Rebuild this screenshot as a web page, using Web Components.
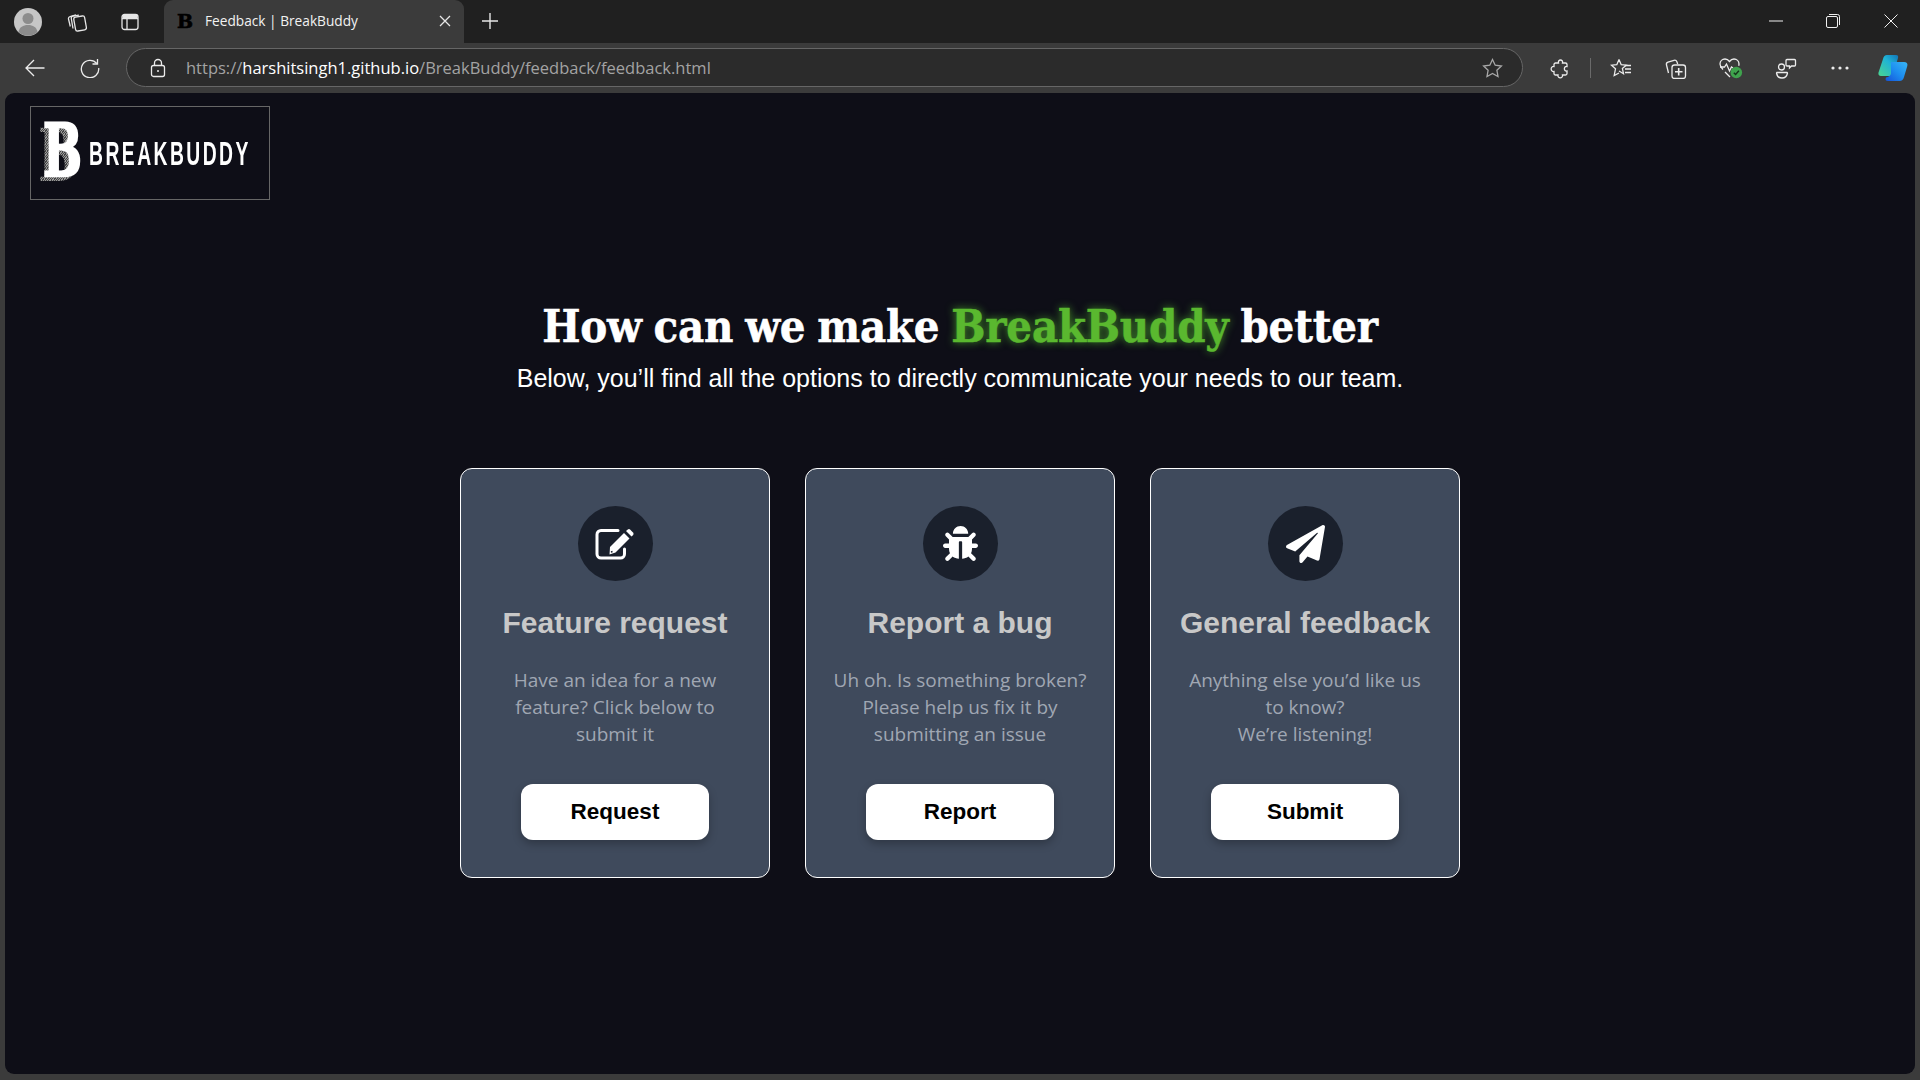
<!DOCTYPE html>
<html lang="en">
<head>
<meta charset="utf-8">
<title>Feedback | BreakBuddy</title>
<style>
  html, body { margin: 0; height: 100%; overflow: hidden; background: #3b3b3b; }
  body { display: flex; flex-direction: column; font-family: "Liberation Sans", sans-serif; }
  browser-frame { flex: 1; min-height: 0; }
</style>
</head>
<body>

<template id="tpl-frame">
  <style>
    :host { display: flex; flex-direction: column; height: 100%; }
    .viewport { flex: 1; min-height: 0; margin: 0 5px 6px 5px; border-radius: 9px; background: #0e0e17; overflow: hidden; display: flex; flex-direction: column; }
  </style>
  <browser-tabs></browser-tabs>
  <browser-toolbar></browser-toolbar>
  <div class="viewport"><slot></slot></div>
</template>

<template id="tpl-tabs">
  <style>
    :host { display: flex; height: 43px; background: #202020; color: #fff; font: 14px "Open Sans", sans-serif; }
    svg { display: block; fill: none; stroke: #e6e6e6; stroke-width: 1.3; }
    .left { display: flex; width: 164px; flex: none; align-items: center; }
    .avatar { margin-left: 14px; width: 28px; height: 28px; flex: none; }
    .ic { flex: none; }
    .tab { width: 300px; flex: none; background: #3b3b3b; border-radius: 9px 9px 0 0; display: flex; align-items: center; box-sizing: border-box; padding: 0 13px 2px 13px; }
    .fav { width: 13px; font: 700 19px "DejaVu Serif", serif; color: #000; text-align: center; flex: none; -webkit-text-stroke: .6px #000; }
    .title { margin-left: 15px; flex: 1; font-size: 13.7px; color: #f2f2f2; white-space: nowrap; }
    .plus { margin-left: 17px; align-self: center; margin-top: -2px; }
    .spacer { flex: 1; }
    .win { display: flex; align-items: center; margin-top: -1px; }
    .win svg { stroke: #f0f0f0; stroke-width: 1; }
  </style>
  <div class="left">
    <svg class="avatar" viewBox="0 0 28 28" style="stroke:none">
      <circle cx="14" cy="14" r="14" fill="#c6c6c6"/>
      <circle cx="14" cy="10.500" r="5.500" fill="#8c8c8c"/>
      <path d="M4.500 24c1-5 4.500-7 9.500-7s8.500 2 9.500 7a14 14 0 0 1-19 0z" fill="#8c8c8c"/>
    </svg>
    <svg class="ic" style="margin-left:24px" width="22" height="22" viewBox="0 0 22 22">
      <rect x="8.500" y="5.500" width="11" height="14" rx="2" transform="rotate(-10 14 12)"/>
      <path d="M7 17.500 5.300 7.500a2 2 0 0 1 1.600-2.300l6-1.100"/>
      <path d="M4.300 15.500 2.500 8a2 2 0 0 1 1.500-2.400l6-1.700"/>
    </svg>
    <svg class="ic" style="margin-left:32px" width="20" height="20" viewBox="0 0 20 20" >
      <rect x="2" y="2.500" width="16" height="15" rx="2.500"/>
      <path d="M2 6.500h16M7 6.500v11"/>
      <path d="M2.500 4.500h15" stroke-width="3"/>
    </svg>
  </div>
  <div class="tab">
    <span class="fav">B</span>
    <span class="title">Feedback | BreakBuddy</span>
    <svg width="12" height="12" viewBox="0 0 12 12" style="stroke-width:1.300"><path d="M1 1l10 10M11 1 1 11"/></svg>
  </div>
  <svg class="plus" width="18" height="18" viewBox="0 0 18 18" style="stroke-width:1.400"><path d="M9 1v16M1 9h16"/></svg>
  <span class="spacer"></span>
  <div class="win">
    <svg width="14" height="4" viewBox="0 0 14 4"><path d="M0 2h14"/></svg>
    <svg style="margin-left:43px" width="14" height="14" viewBox="0 0 14 14"><rect x=".5" y="2.500" width="11" height="11" rx="1.500"/><path d="M3 .5h8.500a2 2 0 0 1 2 2V11"/></svg>
    <svg style="margin:0 22px 0 44px" width="14" height="14" viewBox="0 0 14 14"><path d="M.5.5l13 13M13.500.5l-13 13"/></svg>
  </div>
</template>

<template id="tpl-toolbar">
  <style>
    :host { display: flex; align-items: center; height: 50px; background: #3b3b3b; }
    svg { display: block; fill: none; stroke: #ececec; stroke-width: 1.3; flex: none; }
    .nav { display: flex; align-items: center; width: 126px; flex: none; }
    .address { flex: none; width: 1397px; height: 39px; box-sizing: border-box; margin-top: -1px; border: 1px solid #666; border-radius: 20px; background: #2b2b2b; display: flex; align-items: center; padding-left: 23px; font: 16.500px "Open Sans", sans-serif; color: #a3a3a3; white-space: nowrap; }
    .url { margin-left: 20px; flex: 1; }
    .url b { font-weight: 400; color: #fff; }
    .btn { width: 55px; display: flex; justify-content: center; flex: none; }
    .sep { width: 1px; height: 20px; background: #6a6a6a; flex: none; margin: 0 2px 0 3px; }
  </style>
  <div class="nav">
    <svg style="margin-left:25px" width="20" height="18" viewBox="0 0 20 18" stroke-width="1.400"><path d="M19.500 9H1M9 1 1 9l8 8"/></svg>
    <svg style="margin-left:35px" width="20" height="20" viewBox="0 0 20 20"><path d="M16.800 5.500A8.700 8.700 0 1 0 18.700 10"/><path d="M17.500 1v5h-5"/></svg>
  </div>
  <div class="address">
    <svg width="16" height="20" viewBox="0 0 16 20"><rect x="1.500" y="7.500" width="13" height="11" rx="2"/><path d="M4.500 7.500V5a3.500 3.500 0 0 1 7 0v2.500"/><circle cx="8" cy="13" r="1" fill="#ececec" stroke="none"/></svg>
    <span class="url">https://<b>harshitsingh1.github.io</b>/BreakBuddy/feedback/feedback.html</span>
    <svg style="margin-right:19px;stroke:#a8a8a8" width="21" height="20" viewBox="0 0 21 20"><path d="M10.500 1.500l2.700 5.700 6.200.8-4.500 4.300 1.100 6.200-5.500-3-5.500 3 1.100-6.200L1.600 8l6.200-.8z"/></svg>
  </div>
  <span class="btn" style="margin-left:9px">
    <svg width="20" height="21" viewBox="0 0 20 21"><path d="M5.500 5H8.500C7.500 1 13.500 1 12.500 5H15.500a1.500 1.500 0 0 1 1.500 1.500V8.500C13.500 7.800 13.500 13.700 17 13V15.500a1.500 1.500 0 0 1-1.500 1.500H12.500C13.300 20.700 7.200 20.700 8 17H5.500A1.500 1.500 0 0 1 4 15.500V13.500C.2 14 .2 8 4 8.500V6.500A1.500 1.500 0 0 1 5.500 5z"/></svg>
  </span>
  <span class="sep"></span>
  <span class="btn">
    <svg width="22" height="20" viewBox="0 0 22 20"><path d="M9 1.500l2.200 5.200 5 .5-3.800 3.400 1.100 5.100L9 13M9 1.500 6.800 6.700l-5.300.5 4 3.600-1.300 6.700L9 15"/><path d="M15 7.500h6M15 11h6M15 14.500h6"/></svg>
  </span>
  <span class="btn">
    <svg width="22" height="21" viewBox="0 0 22 21"><path d="M3.500 15 1.500 7c-.4-1.500.3-2.500 1.500-2.900l6-1.800c1.300-.4 2.400.2 2.900 1.500l.8 2.200"/><rect x="7" y="7" width="13.500" height="13.500" rx="2.500"/><path d="M13.700 10v7.500M10 13.700h7.500" stroke-width="1.600"/></svg>
  </span>
  <span class="btn">
    <svg width="24" height="22" viewBox="0 0 24 22"><path d="M4 12.500C2 10.500 1 9 1 7c0-3 2.300-5 5-5 2 0 3.400 1 4.500 2.500C11.600 3 13 2 15 2c2.700 0 5 2 5 5 0 .7-.1 1.300-.3 1.800"/><path d="M1 10h4.500l2-3 3 7 2-4 1.500 1M6 15l5 5"/><circle cx="17.300" cy="15.500" r="5.800" fill="#3fa34d" stroke="none"/><path d="M14.800 15.700l1.800 1.800 3.300-3.700" stroke="#14331a" stroke-width="1.400"/></svg>
  </span>
  <span class="btn">
    <svg width="22" height="21" viewBox="0 0 22 21"><circle cx="6.500" cy="9" r="3"/><path d="M1.500 14.500h10.500c.5 0 .5.500.4 1-.6 2.800-3 4.500-5.400 4.500s-4.800-1.700-5.400-4.500c-.1-.5-.1-1 .4-1z"/><path d="M12 1.500h7.500a1 1 0 0 1 1 1v4.500a1 1 0 0 1-1 1h-3l-2 2V8H12a1 1 0 0 1-1-1V2.500a1 1 0 0 1 1-1z"/></svg>
  </span>
  <span class="btn" style="width:54px">
    <svg width="18" height="4" viewBox="0 0 18 4" style="stroke:none;fill:#ececec"><circle cx="2" cy="2" r="1.600"/><circle cx="9" cy="2" r="1.600"/><circle cx="16" cy="2" r="1.600"/></svg>
  </span>
  <span class="btn" style="width:51px">
    <svg width="30" height="28" viewBox="0 0 30 28" style="stroke:none">
      <defs>
        <linearGradient id="cp1" x1="0" y1="1" x2="1" y2="0"><stop offset="0" stop-color="#4bd58f"/><stop offset=".6" stop-color="#1fb3d6"/><stop offset="1" stop-color="#1274b8"/></linearGradient>
        <linearGradient id="cp2" x1="0" y1="1" x2="1" y2="0"><stop offset="0" stop-color="#1653d8"/><stop offset=".5" stop-color="#1d8ef0"/><stop offset="1" stop-color="#38b6f5"/></linearGradient>
      </defs>
      <path d="M9 1h9c2 0 2.500 1 2 3l-4.500 15c-.6 2-1.500 3-3.500 3H3c-2 0-3-1.500-2.500-3.500L5 5c.6-2.500 2-4 4-4z" fill="url(#cp1)"/>
      <path d="M13 8h13c2.500 0 4 1.500 3.300 4L26 23c-.7 2.500-2 4-4.500 4H10c-2.500 0-3-1.500-2-3.500 3-.5 4.500-2 5-4z" fill="url(#cp2)"/>
    </svg>
  </span>
</template>

<template id="tpl-logo">
  <style>
    :host { display: flex; align-items: center; box-sizing: border-box; width: 240px; height: 94px; border: 1px solid #666; color: #fff; padding-left: 12px; }
    .mark { display: grid; flex: none; width: 36px; font: 700 72px/1 "DejaVu Serif", serif; transform: scaleX(.64); transform-origin: left center; -webkit-text-stroke: 2.500px #fff; }
    .mark::before { content: "B"; grid-area: 1 / 1; margin: 5px 0 0 -8px; color: transparent; -webkit-text-stroke: 0; background: repeating-linear-gradient(45deg, #999 0 1px, #444 1px 2px); -webkit-background-clip: text; background-clip: text; }
    .mark span { grid-area: 1 / 1; }
    .word { flex: none; margin-left: 10px; font: 700 33px/1 "Liberation Sans", sans-serif; letter-spacing: 4.200px; transform: scaleX(.585); transform-origin: left center; white-space: nowrap; width: 158px; }
  </style>
  <div class="mark"><span>B</span></div>
  <div class="word">BREAKBUDDY</div>
</template>

<template id="tpl-hero">
  <style>
    :host { display: block; text-align: center; color: #fff; margin-top: 97px; }
    h1 { margin: 0; font: 700 45px/60px "DejaVu Serif", serif; font-stretch: condensed; letter-spacing: -.2px; word-spacing: -2px; -webkit-text-stroke: .5px; }
    p { margin: 6px 0 0; font: 25px/30px "Liberation Sans", sans-serif; }
  </style>
  <h1><slot name="title"></slot></h1>
  <p><slot name="subtitle"></slot></p>
</template>

<template id="tpl-card">
  <style>
    :host { display: flex; flex-direction: column; align-items: center; box-sizing: border-box; width: 310px; height: 410px; padding: 37px 20px 0; background: #3f4a5c; border: 1px solid #fff; border-radius: 12px; text-align: center; }
    .circle { width: 75px; height: 75px; border-radius: 50%; background: #1a202c; display: flex; align-items: center; justify-content: center; flex: none; }
    ::slotted(svg) { fill: #fff; display: block; }
    h2 { margin: 24px 0 0; font: 700 30px/36px "Liberation Sans", sans-serif; color: #c8c8c8; white-space: nowrap; }
    p { margin: 26px 0 0; font: 19px/27px "Open Sans", sans-serif; color: #a0a7b3; height: 81px; width: 262px; }
    a { margin-top: 36px; width: 188px; height: 56px; box-sizing: border-box; display: flex; align-items: center; justify-content: center; background: #fff; border-radius: 12px; box-shadow: 0 4px 8px rgba(0,0,0,.25); color: #000; font: 700 22.500px "Liberation Sans", sans-serif; text-decoration: none; flex: none; }
  </style>
  <div class="circle"><slot name="icon"></slot></div>
  <h2><slot name="title"></slot></h2>
  <p><slot name="text"></slot></p>
  <a href="#"><slot name="action"></slot></a>
</template>

<browser-frame>
  <feedback-page>
    <site-logo slot="logo"></site-logo>
    <hero-heading slot="hero">
      <span slot="title">How can we make <span style="color:#5ab82f;text-shadow:0 0 8px rgba(90,200,50,.75)">BreakBuddy</span> better</span>
      <span slot="subtitle">Below, you’ll find all the options to directly communicate your needs to our team.</span>
    </hero-heading>
    <feedback-card>
      <svg slot="icon" width="40" height="32" viewBox="0 0 40 32">
        <path d="M23 2.500H6a4 4 0 0 0-4 4V26a4 4 0 0 0 4 4h19.500a4 4 0 0 0 4-4V21" fill="none" stroke="#fff" stroke-width="3" stroke-linecap="round"/>
        <path d="M29 5l5.500 5.500L20.500 24.500 14.500 26.500 15 19z"/>
        <path d="M31 3l1.800-1.500a2 2 0 0 1 2.500.2l2.700 2.700a2 2 0 0 1 .2 2.500L36.500 8.500z"/>
        <path d="M15.800 23.200l1.500-.4.500 1.500-1.800.5z" fill="#1a202c"/>
      </svg>
      <span slot="title">Feature request</span>
      <span slot="text">Have an idea for a new feature? Click below to submit it</span>
      <span slot="action">Request</span>
    </feedback-card>
    <feedback-card>
      <svg slot="icon" width="35" height="35" viewBox="0 0 512 512"><path d="M511.988 288.900c-.478 17.430-15.217 31.100-32.653 31.100H424v16c0 21.864-4.882 42.584-13.600 61.145l60.228 60.228c12.496 12.497 12.496 32.758 0 45.255-12.498 12.497-32.759 12.496-45.256 0l-54.736-54.736C345.886 467.965 314.351 480 280 480V236c0-6.627-5.373-12-12-12h-24c-6.627 0-12 5.373-12 12v244c-34.351 0-65.886-12.035-90.636-32.108l-54.736 54.736c-12.498 12.497-32.759 12.496-45.256 0-12.496-12.497-12.496-32.758 0-45.255l60.228-60.228C92.882 378.584 88 357.864 88 336v-16H32.666C15.230 320 .491 306.330.013 288.900-.484 270.816 14.028 256 32 256h56v-58.745l-46.628-46.628c-12.496-12.497-12.496-32.758 0-45.255 12.498-12.497 32.758-12.497 45.256 0L141.255 160h229.489l54.627-54.627c12.498-12.497 32.758-12.497 45.256 0 12.496 12.497 12.496 32.758 0 45.255L424 197.255V256h56c17.972 0 32.484 14.816 31.988 32.900zM257 0c-61.856 0-112 50.144-112 112h224C369 50.144 318.856 0 257 0z"/></svg>
      <span slot="title">Report a bug</span>
      <span slot="text">Uh oh. Is something broken? Please help us fix it by submitting an issue</span>
      <span slot="action">Report</span>
    </feedback-card>
    <feedback-card>
      <svg slot="icon" width="39" height="38" viewBox="0 0 512 512" preserveAspectRatio="none"><path d="M476 3.200L12.500 270.600c-18.100 10.400-15.800 35.600 2.200 43.200L121 358.400l287.300-253.200c5.500-4.900 13.300 2.600 8.600 8.300L176 407v80.500c0 23.600 28.500 32.900 42.500 15.800L282 426l124.600 52.200c14.200 6 30.400-2.900 33-18.200l72-432C515 7.800 493.300-6.800 476 3.200z"/></svg>
      <span slot="title">General feedback</span>
      <span slot="text">Anything else you’d like us<br>to know?<br>We’re listening!</span>
      <span slot="action">Submit</span>
    </feedback-card>
  </feedback-page>
</browser-frame>

<script>
  // every element just clones its template into an open shadow root
  function define(name, tplId) {
    customElements.define(name, class extends HTMLElement {
      constructor() {
        super();
        this.attachShadow({ mode: 'open' });
        this.shadowRoot.appendChild(document.getElementById(tplId).content.cloneNode(true));
      }
    });
  }

  define('browser-frame', 'tpl-frame');
  define('browser-tabs', 'tpl-tabs');
  define('browser-toolbar', 'tpl-toolbar');
  define('site-logo', 'tpl-logo');
  define('hero-heading', 'tpl-hero');
  define('feedback-card', 'tpl-card');

  class FeedbackPage extends HTMLElement {
    constructor() {
      super();
      this.attachShadow({ mode: 'open' });
      this.shadowRoot.innerHTML = `
        <style>
          :host { display: block; padding: 13px 25px 0; }
          .cards { display: flex; justify-content: center; gap: 35px; margin-top: 75px; }
        </style>
        <slot name="logo"></slot>
        <slot name="hero"></slot>
        <div class="cards"><slot></slot></div>
      `;
    }
  }
  customElements.define('feedback-page', FeedbackPage);
</script>
</body>
</html>
